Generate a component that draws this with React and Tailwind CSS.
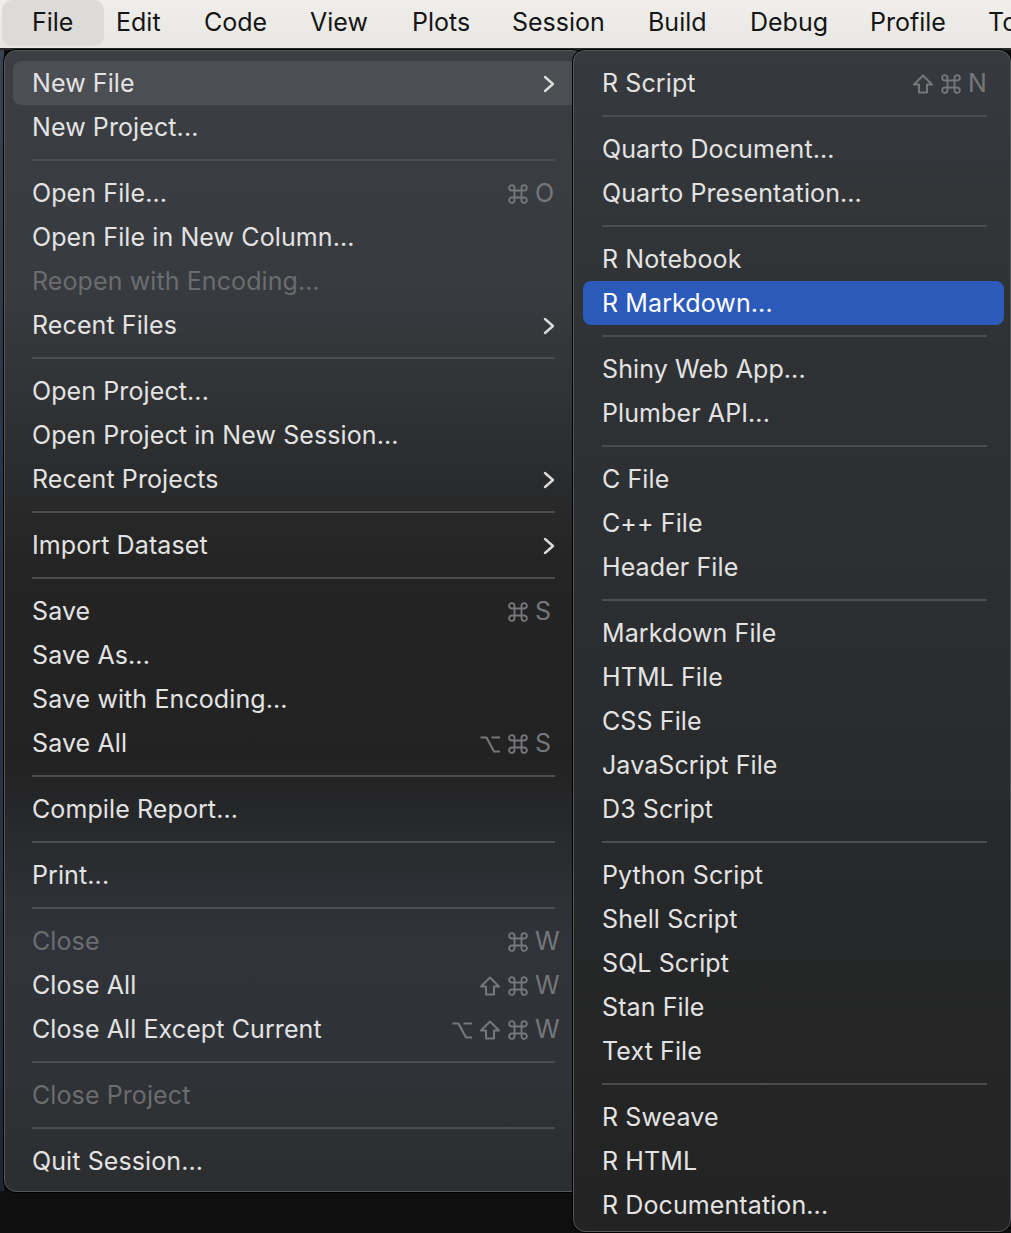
import React from "react";

const FONT = { fontFamily: "Inter, 'Noto Sans', 'DejaVu Sans', sans-serif" };

const menuBar = [
  { label: "Edit", w: "w-[100px] pl-[12px]" },
  { label: "Code", w: "w-[106px]" },
  { label: "View", w: "w-[102px]" },
  { label: "Plots", w: "w-[100px]" },
  { label: "Session", w: "w-[136px]" },
  { label: "Build", w: "w-[102px]" },
  { label: "Debug", w: "w-[120px]" },
  { label: "Profile", w: "w-[118px]" },
  { label: "Tools", w: "w-[120px]" },
];

const fileMenu = [
  { label: "New File", sub: true, active: true },
  { label: "New Project..." },
  "sep",
  { label: "Open File...", keys: ["cmd"], key: "O" },
  { label: "Open File in New Column..." },
  { label: "Reopen with Encoding...", disabled: true },
  { label: "Recent Files", sub: true },
  "sep",
  { label: "Open Project..." },
  { label: "Open Project in New Session..." },
  { label: "Recent Projects", sub: true },
  "sep",
  { label: "Import Dataset", sub: true },
  "sep",
  { label: "Save", keys: ["cmd"], key: "S" },
  { label: "Save As..." },
  { label: "Save with Encoding..." },
  { label: "Save All", keys: ["opt", "cmd"], key: "S" },
  "sep",
  { label: "Compile Report..." },
  "sep",
  { label: "Print..." },
  "sep",
  { label: "Close", keys: ["cmd"], key: "W", disabled: true },
  { label: "Close All", keys: ["shift", "cmd"], key: "W" },
  { label: "Close All Except Current", keys: ["opt", "shift", "cmd"], key: "W" },
  "sep",
  { label: "Close Project", disabled: true },
  "sep",
  { label: "Quit Session..." },
];

const newFileMenu = [
  { label: "R Script", keys: ["shift", "cmd"], key: "N" },
  "sep",
  { label: "Quarto Document..." },
  { label: "Quarto Presentation..." },
  "sep",
  { label: "R Notebook" },
  { label: "R Markdown...", selected: true },
  "sep",
  { label: "Shiny Web App..." },
  { label: "Plumber API..." },
  "sep",
  { label: "C File" },
  { label: "C++ File" },
  { label: "Header File" },
  "sep",
  { label: "Markdown File" },
  { label: "HTML File" },
  { label: "CSS File" },
  { label: "JavaScript File" },
  { label: "D3 Script" },
  "sep",
  { label: "Python Script" },
  { label: "Shell Script" },
  { label: "SQL Script" },
  { label: "Stan File" },
  { label: "Text File" },
  "sep",
  { label: "R Sweave" },
  { label: "R HTML" },
  { label: "R Documentation..." },
];

const Chevron = () => (
  <svg width="12" height="20" viewBox="0 0 12 20" className="mr-[6px]">
    <polyline
      points="2,3 10,10 2,17"
      fill="none"
      stroke="#dadada"
      strokeWidth="2.4"
      strokeLinecap="round"
      strokeLinejoin="round"
    />
  </svg>
);

// modifier key glyphs (⌘ ⇧ ⌥)
const ModKey = ({ k }) => {
  let d = "M1.5 4.5 H7.5 L15 18.5 H21 M12.5 4.5 H21";
  if (k === "cmd") {
    d =
      "M7.5 7.5 V5 A2.7 2.7 0 1 0 5 7.5 H17 A2.7 2.7 0 1 0 14.5 5 V17 A2.7 2.7 0 1 0 17 14.5 H5 A2.7 2.7 0 1 0 7.5 17 Z";
  }
  if (k === "shift") {
    d = "M11 2.5 L20 11.5 H15 V19.5 H7 V11.5 H2 Z";
  }
  return (
    <svg width="22" height="22" viewBox="0 0 22 22">
      <path
        d={d}
        fill="none"
        stroke="currentColor"
        strokeWidth={k === "cmd" ? 1.9 : 2.1}
        strokeLinejoin="round"
      />
    </svg>
  );
};

const Shortcut = ({ keys, letter }) => (
  <div className="flex items-center gap-[6px] text-[#75777a]">
    {keys.map((k, i) => (
      <ModKey key={i} k={k} />
    ))}
    <span className="w-[26px] text-left text-[25px]">{letter}</span>
  </div>
);

const MenuList = ({ items, sepClass, rowClass, padRight }) => (
  <>
    {items.map((it, i) => {
      if (it === "sep") {
        return (
          <div key={i} className="h-[22px] flex items-center">
            <div className={`h-[2px] bg-[#4b4d51] ${sepClass}`} />
          </div>
        );
      }
      let bg = "";
      if (it.active) bg = "bg-[#4b4e53]";
      if (it.selected) bg = "bg-[#2c5abb]";
      const color = it.disabled
        ? "text-[#6a6c6f]"
        : it.selected
        ? "text-white"
        : "text-[#e3e3e3]";
      return (
        <div
          key={i}
          className={`h-[44px] flex items-center justify-between rounded-[8px] pl-[19px] pt-[2px] ${padRight} ${rowClass} ${bg}`}
        >
          <span className={`text-[25px] tracking-[0.1px] ${color}`}>{it.label}</span>
          {it.sub && <Chevron />}
          {it.key && <Shortcut keys={it.keys} letter={it.key} />}
        </div>
      );
    })}
  </>
);

export default function App() {
  return (
    <div
      className="w-[1011px] h-[1233px] overflow-hidden bg-[#0f0f0f] flex flex-col"
      style={FONT}
    >
      <div className="h-[48px] shrink-0 bg-[linear-gradient(180deg,#efeeea,#e8e7e3)] flex items-start pl-[2px] text-[25px] text-[#151515] whitespace-nowrap overflow-hidden">
        <div className="w-[102px] shrink-0 h-[46px] rounded-[10px] bg-[#dcdbd7] pl-[30px] flex items-center">
          File
        </div>
        {menuBar.map((m) => (
          <div key={m.label} className={`h-[46px] flex items-center shrink-0 ${m.w}`}>
            {m.label}
          </div>
        ))}
      </div>
      <div className="h-[2px] bg-[#2a2a2a] shrink-0" />

      <div className="flex items-start grow">
        <div className="w-[4px] h-[1141px] bg-[linear-gradient(180deg,#3a4252,#263246_40%,#2b3445_70%,#1f2530)] shrink-0" />
        <div className="w-[580px] shrink-0 rounded-[12px] border border-[#55575b] ring-1 ring-black bg-[linear-gradient(180deg,#3b3e42_0%,#373a3e_22%,#242424_45%,#222222_62%,#30343a_78%,#2f3236_90%,#2c2d2f_100%)] pt-[10px] pb-[8px] whitespace-nowrap">
          <MenuList
            items={fileMenu}
            sepClass="ml-[27px] w-[523px]"
            rowClass="ml-[8px] mr-[5px]"
            padRight="pr-[17px]"
          />
        </div>
        <div className="w-[438px] -ml-[11px] shrink-0 relative z-10 rounded-[12px] border border-[#55575b] ring-1 ring-black bg-[linear-gradient(180deg,#36393d_0%,#303336_20%,#2c2e31_45%,#262728_75%,#232323_100%)] pt-[10px] pb-[4px] whitespace-nowrap">
          <MenuList
            items={newFileMenu}
            sepClass="ml-[28px] w-[385px]"
            rowClass="ml-[9px] mr-[6px]"
            padRight="pr-[10px]"
          />
        </div>
      </div>
    </div>
  );
}
